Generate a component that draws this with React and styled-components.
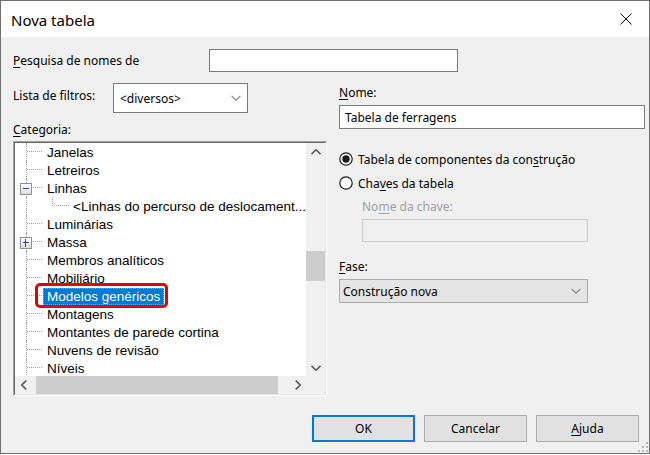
import React from 'react'
import styled, { createGlobalStyle } from 'styled-components'

const GlobalStyle = createGlobalStyle`
  html, body { margin: 0; padding: 0; background: #fff; }
  body {
    font-family: "Noto Sans", "Open Sans", sans-serif;
    font-size: 12px;
    color: #000;
  }
  * { box-sizing: border-box; }
`

const Window = styled.div`
  width: 650px;
  height: 454px;
  border: 1px solid #6f6f6f;
  display: flex;
  flex-direction: column;
  background: #f0f0f0;
`

const TitleBar = styled.div`
  height: 36px;
  background: #fff;
  display: flex;
  align-items: center;
  justify-content: space-between;
  padding-left: 10px;
`

const Title = styled.span`
  font-size: 15px;
  padding-top: 1px;
`

const CloseBtn = styled.div`
  width: 46px;
  height: 36px;
  display: flex;
  align-items: center;
  justify-content: center;
`

const Content = styled.div`
  position: relative;
  flex: 1;
  display: flex;
  flex-direction: column;
  padding: 12px 10px 11px 12px;
`

const SearchRow = styled.div`
  display: flex;
  align-items: center;
  height: 23px;
`

const Label = styled.div`
  line-height: 16px;
  width: ${p => p.$width ? p.$width + 'px' : 'auto'};
  margin-top: ${p => p.$top || 0}px;
  padding-left: ${p => p.$indent || 0}px;
  color: ${p => p.$disabled ? '#a0a0a0' : '#000'};
  flex-shrink: 0;
`

const Key = styled.span`
  text-decoration: underline;
  text-underline-offset: 2px;
`

const TextBox = styled.div`
  width: ${p => p.$width}px;
  height: ${p => p.$height || 24}px;
  margin-top: ${p => p.$top || 0}px;
  margin-left: ${p => p.$left || 0}px;
  border: 1px solid ${p => p.$disabled ? '#cccccc' : '#7a7a7a'};
  background: ${p => p.$disabled ? '#f0f0f0' : '#fff'};
  display: flex;
  align-items: center;
  padding: 0 5px;
`

const Combo = styled.div`
  width: ${p => p.$width}px;
  height: ${p => p.$height}px;
  margin-top: ${p => p.$top || 0}px;
  border: 1px solid ${p => p.$flat ? '#adadad' : '#7a7a7a'};
  background: ${p => p.$flat ? '#e5e5e5' : '#fff'};
  display: flex;
  align-items: center;
  justify-content: space-between;
  padding: 0 6px 0 ${p => p.$flat ? 3 : 6}px;
`

const Main = styled.div`
  display: flex;
  gap: 12px;
  margin-top: 11px;
`

const LeftCol = styled.div`
  width: 314px;
  display: flex;
  flex-direction: column;
`

const RightCol = styled.div`
  width: 306px;
  display: flex;
  flex-direction: column;
`

const FilterRow = styled.div`
  display: flex;
  align-items: flex-start;
  height: 30px;
`

const TreeBox = styled.div`
  margin-top: 3px;
  width: 314px;
  height: 255px;
  border: 1px solid;
  border-color: #a0a0a0 #ffffff #ffffff #a0a0a0;
`

const TreeInner = styled.div`
  width: 100%;
  height: 100%;
  border: 1px solid;
  border-color: #696969 #e3e3e3 #e3e3e3 #696969;
  display: grid;
  grid-template-columns: 291px 19px;
  grid-template-rows: 233px 18px;
`

const Viewport = styled.div`
  background: #fff;
  overflow: hidden;
  font-family: "Liberation Sans", Arial, sans-serif;
  font-size: 13.5px;
`

const TreeRow = styled.div`
  position: relative;
  height: 18px;
  display: flex;
  align-items: center;
  padding-left: ${p => (p.$level === 2 ? 54 : 28)}px;
  padding-top: 1px;
  white-space: nowrap;
  &::before {
    content: '';
    position: absolute;
    left: 11px;
    top: 0;
    bottom: 0;
    border-left: 1px dotted #a0a0a0;
  }
`

const Elbow = styled.span`
  position: absolute;
  top: 0;
  left: ${p => (p.$child ? 37 : 12)}px;
  width: ${p => (p.$child ? 17 : 15)}px;
  height: 9px;
  border-bottom: 1px dotted #a0a0a0;
  border-left: ${p => (p.$child ? '1px dotted #a0a0a0' : 'none')};
`

const Expander = styled.span`
  position: absolute;
  z-index: 1;
  left: 5px;
  top: 4px;
  width: 12px;
  height: 12px;
  border: 1px solid #919191;
  background: linear-gradient(#ffffff, #dcdcdc);
  &::before {
    content: '';
    position: absolute;
    left: 2px;
    right: 2px;
    top: 4px;
    height: 1px;
    background: #1e4e8c;
  }
  &::after {
    content: '';
    display: ${p => (p.$open ? 'none' : 'block')};
    position: absolute;
    top: 1px;
    bottom: 1px;
    left: 4px;
    width: 1px;
    background: #1e4e8c;
  }
`

const ItemText = styled.span`
  position: relative;
  height: 17px;
  line-height: 16px;
  padding: 0 3px;
  border: 1px dotted ${p => (p.$selected ? '#e89a3c' : 'transparent')};
  background: ${p => (p.$selected ? '#0078d7' : 'transparent')};
  color: ${p => (p.$selected ? '#fff' : '#000')};
  &::after {
    content: '';
    display: ${p => (p.$marked ? 'block' : 'none')};
    position: absolute;
    top: -6px;
    left: -9px;
    right: -5px;
    bottom: -4px;
    border: 3px solid #e30000;
    border-radius: 5px;
  }
`

const VScroll = styled.div`
  background: #f0f0f0;
  display: flex;
  flex-direction: column;
  align-items: stretch;
`

const HScroll = styled.div`
  background: #f0f0f0;
  display: flex;
  align-items: stretch;
`

const ArrowBtn = styled.div`
  flex: 0 0 17px;
  display: flex;
  align-items: center;
  justify-content: center;
`

const Track = styled.div`
  flex: 1;
  display: flex;
  flex-direction: ${p => (p.$horizontal ? 'row' : 'column')};
`

const Thumb = styled.div`
  background: #cdcdcd;
  ${p => p.$horizontal
    ? `margin-left: ${p.$offset}px; width: ${p.$size}px;`
    : `margin-top: ${p.$offset}px; height: ${p.$size}px;`}
`

const Corner = styled.div`
  background: #f0f0f0;
`

const RadioRow = styled.div`
  display: flex;
  align-items: center;
  gap: 5px;
  height: 18px;
  margin-top: ${p => p.$top}px;
`

const Footer = styled.div`
  margin-top: auto;
  display: flex;
  justify-content: flex-end;
  gap: 9px;
`

const Button = styled.div`
  width: 103px;
  height: 27px;
  display: flex;
  align-items: center;
  justify-content: center;
  background: #e1e1e1;
  border: ${p => (p.$default ? '2px solid #0078d7' : '1px solid #adadad')};
`

const Grip = styled.svg`
  position: absolute;
  right: 1px;
  bottom: 1px;
`

const Chevron = ({ dir = 'down', color = '#606060', weight = 1.2 }) => {
  const pts = {
    down: '0.5,0.5 4.5,4.5 8.5,0.5',
    up: '0.5,4.5 4.5,0.5 8.5,4.5',
    left: '4.5,0.5 0.5,4.5 4.5,8.5',
    right: '0.5,0.5 4.5,4.5 0.5,8.5',
  }[dir]
  const horiz = dir === 'left' || dir === 'right'
  return (
    <svg width={horiz ? 6 : 10} height={horiz ? 10 : 6} viewBox={horiz ? '0 0 5 9' : '0 0 9 5'}>
      <polyline points={pts} fill="none" stroke={color} strokeWidth={weight} />
    </svg>
  )
}

const Radio = ({ checked }) => (
  <svg width="14" height="14" viewBox="0 0 14 14">
    <circle cx="7" cy="7" r="6.2" fill="#fff" stroke="#1a1a1a" strokeWidth="1.2" />
    {checked && <circle cx="7" cy="7" r="3.7" fill="#1a1a1a" />}
  </svg>
)

const items = [
  { text: 'Janelas' },
  { text: 'Letreiros' },
  { text: 'Linhas', expander: 'open' },
  { text: '<Linhas do percurso de deslocament...', level: 2 },
  { text: 'Luminárias' },
  { text: 'Massa', expander: 'closed' },
  { text: 'Membros analíticos' },
  { text: 'Mobiliário' },
  { text: 'Modelos genéricos', selected: true },
  { text: 'Montagens' },
  { text: 'Montantes de parede cortina' },
  { text: 'Nuvens de revisão' },
  { text: 'Níveis' },
]

export default function App() {
  return (
    <>
      <GlobalStyle />
      <Window>
        <TitleBar>
          <Title>Nova tabela</Title>
          <CloseBtn>
            <svg width="12" height="12" viewBox="0 0 12 12">
              <path d="M0.5 0.5 L11.5 11.5 M11.5 0.5 L0.5 11.5" stroke="#000" strokeWidth="1" />
            </svg>
          </CloseBtn>
        </TitleBar>

        <Content>
          <SearchRow>
            <Label $width={196}><Key>P</Key>esquisa de nomes de</Label>
            <TextBox $width={249} $height={23} />
          </SearchRow>

          <Main>
            <LeftCol>
              <FilterRow>
                <Label $width={100} $top={5}>Lista de filtros:</Label>
                <Combo $width={135} $height={30}>
                  <span>&lt;diversos&gt;</span>
                  <Chevron color="#808080" weight={1} />
                </Combo>
              </FilterRow>

              <Label $top={9}><Key>C</Key>ategoria:</Label>

              <TreeBox>
                <TreeInner>
                  <Viewport>
                    {items.map((it) => (
                      <TreeRow key={it.text} $level={it.level || 1}>
                        <Elbow $child={it.level === 2} />
                        {it.expander && <Expander $open={it.expander === 'open'} />}
                        <ItemText $selected={it.selected} $marked={it.selected}>
                          {it.text}
                        </ItemText>
                      </TreeRow>
                    ))}
                  </Viewport>
                  <VScroll>
                    <ArrowBtn><Chevron dir="up" weight={1.5} /></ArrowBtn>
                    <Track>
                      <Thumb $offset={91} $size={30} />
                    </Track>
                    <ArrowBtn><Chevron dir="down" weight={1.5} /></ArrowBtn>
                  </VScroll>
                  <HScroll>
                    <ArrowBtn><Chevron dir="left" weight={1.5} /></ArrowBtn>
                    <Track $horizontal>
                      <Thumb $horizontal $offset={4} $size={242} />
                    </Track>
                    <ArrowBtn><Chevron dir="right" weight={1.5} /></ArrowBtn>
                  </HScroll>
                  <Corner />
                </TreeInner>
              </TreeBox>
            </LeftCol>

            <RightCol>
              <Label $top={2}><Key>N</Key>ome:</Label>
              <TextBox $width={306} $top={4}>Tabela de ferragens</TextBox>

              <RadioRow $top={21}>
                <Radio checked />
                <span>Tabela de componentes da con<Key>s</Key>trução</span>
              </RadioRow>
              <RadioRow $top={6}>
                <Radio />
                <span>Cha<Key>v</Key>es da tabela</span>
              </RadioRow>

              <Label $top={7} $indent={23} $disabled>No<Key>m</Key>e da chave:</Label>
              <TextBox $width={226} $height={23} $top={4} $left={23} $disabled />

              <Label $top={17}><Key>F</Key>ase:</Label>
              <Combo $width={249} $height={24} $top={4} $flat>
                <span>Construção nova</span>
                <Chevron color="#808080" weight={1} />
              </Combo>
            </RightCol>
          </Main>

          <Footer>
            <Button $default>OK</Button>
            <Button>Cancelar</Button>
            <Button><span><Key>A</Key>juda</span></Button>
          </Footer>

          <Grip width="10" height="10" viewBox="0 0 10 10">
            <rect x="8" y="0" width="2" height="2" fill="#b8b8b8" />
            <rect x="8" y="4" width="2" height="2" fill="#b8b8b8" />
            <rect x="4" y="4" width="2" height="2" fill="#b8b8b8" />
            <rect x="8" y="8" width="2" height="2" fill="#b8b8b8" />
            <rect x="4" y="8" width="2" height="2" fill="#b8b8b8" />
            <rect x="0" y="8" width="2" height="2" fill="#b8b8b8" />
          </Grip>
        </Content>
      </Window>
    </>
  )
}
